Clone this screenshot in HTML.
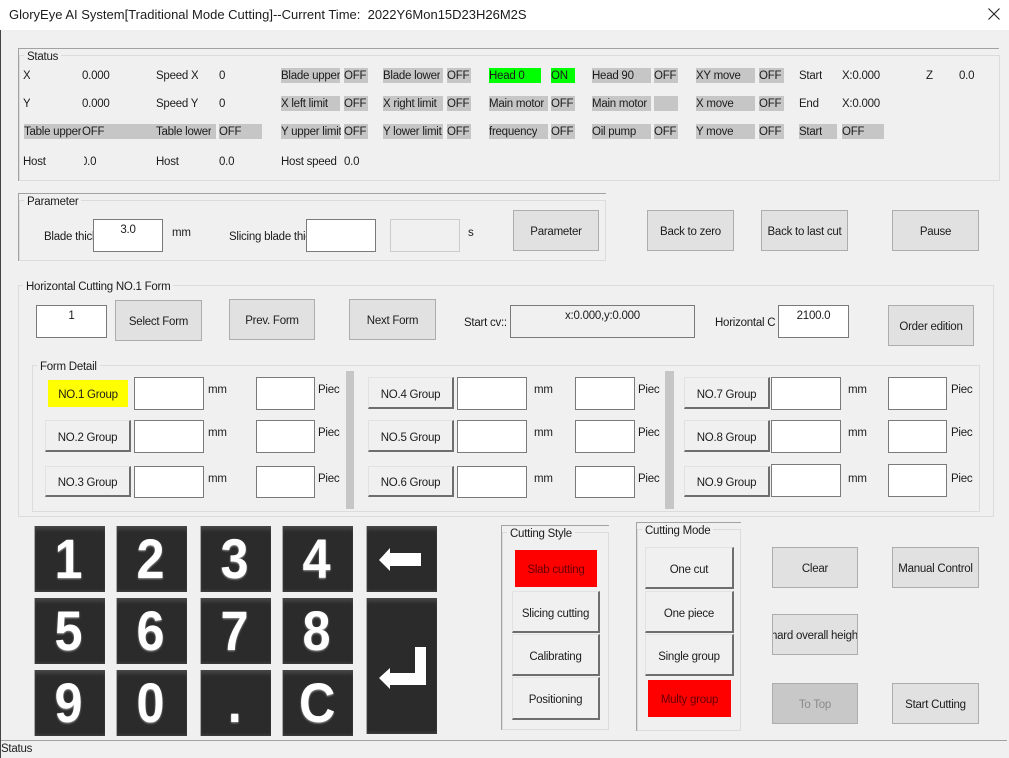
<!DOCTYPE html>
<html><head><meta charset="utf-8"><style>
html,body{margin:0;padding:0}
body{width:1009px;height:758px;position:relative;overflow:hidden;background:#f0f0f0;font-family:"Liberation Sans",sans-serif;font-size:11.5px;letter-spacing:-.25px;color:#1c1c1c}
div{box-sizing:border-box}
.t,.b,.f,.r,.i,.g,.k,.l{position:absolute;white-space:nowrap}
.t{height:16px;line-height:16px;overflow:hidden;margin-top:1px}
.g{background:#c6c6c6;height:15px}
.f{background:#e1e1e1;border:1px solid #adadad;text-align:center;height:41px;line-height:43px;width:87px;overflow:hidden}
.r{background:#f0f0f0;border:1px solid #e2e2e2;border-right:2px solid #6e6e6e;border-bottom:2px solid #6e6e6e;text-align:center;overflow:hidden;padding-top:1px}
.i{background:#fff;border:1px solid #7a7a7a;text-align:center;height:33px;line-height:20px}
.k{width:70px;height:66px;background:#2b2b2b;color:#fff;font-weight:bold;font-size:56px;letter-spacing:0;line-height:66px;text-align:center;box-shadow:-1px 0 0 #a8a8a8,inset 0 5px 5px -2px #4a4a4a,inset 0 -2px 3px -1px #444;text-shadow:0 1px 2px #999}
.k span{display:inline-block;transform:scaleX(.9);position:relative;left:-1px}
.l{background:#f0f0f0;padding:0 3px;height:14px;line-height:14px;margin-top:1px}
.box{position:absolute;border:1px solid #dcdcdc}
.d{position:absolute;background:#a2a2a2}
</style></head><body>
<div style="position:absolute;left:0;top:0;width:1009px;height:30px;background:#fff"></div>
<div class="t" style="left:9px;top:6px;font-size:13px;letter-spacing:0">GloryEye AI System[Traditional Mode Cutting]--Current Time:&nbsp; 2022Y6Mon15D23H26M2S</div>
<svg style="position:absolute;left:988px;top:8px" width="12" height="12"><path d="M.5 .5L11.5 11.5M11.5 .5L.5 11.5" stroke="#222" stroke-width="1.1" fill="none"/></svg>
<div style="position:absolute;left:0;top:30px;width:1px;height:728px;background:#444"></div>

<!-- Status -->
<div class="d" style="left:18px;top:48px;width:981px;height:1px"></div>
<div class="d" style="left:18px;top:48px;width:1px;height:133px"></div>
<div class="box" style="left:19px;top:55px;width:981px;height:126px"></div>
<div class="l" style="left:24px;top:49px">Status</div>

<div class="g" style="left:24px;top:124px;width:192px"></div>
<div class="g" style="left:219px;top:124px;width:43px"></div>
<div class="g" style="left:281px;top:68px;width:59px"></div><div class="g" style="left:344px;top:68px;width:24px"></div>
<div class="g" style="left:281px;top:96px;width:59px"></div><div class="g" style="left:344px;top:96px;width:24px"></div>
<div class="g" style="left:281px;top:124px;width:59px"></div><div class="g" style="left:344px;top:124px;width:24px"></div>
<div class="g" style="left:383px;top:68px;width:60px"></div><div class="g" style="left:447px;top:68px;width:24px"></div>
<div class="g" style="left:383px;top:96px;width:60px"></div><div class="g" style="left:447px;top:96px;width:24px"></div>
<div class="g" style="left:383px;top:124px;width:60px"></div><div class="g" style="left:447px;top:124px;width:24px"></div>
<div class="g" style="left:489px;top:68px;width:52px;background:#00ff00"></div><div class="g" style="left:551px;top:68px;width:24px;background:#00ff00"></div>
<div class="g" style="left:489px;top:96px;width:59px"></div><div class="g" style="left:551px;top:96px;width:24px"></div>
<div class="g" style="left:489px;top:124px;width:59px"></div><div class="g" style="left:551px;top:124px;width:24px"></div>
<div class="g" style="left:592px;top:68px;width:59px"></div><div class="g" style="left:654px;top:68px;width:24px"></div>
<div class="g" style="left:592px;top:96px;width:59px"></div><div class="g" style="left:654px;top:96px;width:24px"></div>
<div class="g" style="left:592px;top:124px;width:59px"></div><div class="g" style="left:654px;top:124px;width:24px"></div>
<div class="g" style="left:696px;top:68px;width:59px"></div><div class="g" style="left:759px;top:68px;width:25px"></div>
<div class="g" style="left:696px;top:96px;width:59px"></div><div class="g" style="left:759px;top:96px;width:25px"></div>
<div class="g" style="left:696px;top:124px;width:59px"></div><div class="g" style="left:759px;top:124px;width:25px"></div>
<div class="g" style="left:799px;top:124px;width:38px"></div><div class="g" style="left:842px;top:124px;width:42px"></div>

<div class="t" style="left:23px;top:67px">X</div><div class="t" style="left:82px;top:67px">0.000</div><div class="t" style="left:156px;top:67px">Speed X</div><div class="t" style="left:219px;top:67px">0</div>
<div class="t" style="left:23px;top:95px">Y</div><div class="t" style="left:82px;top:95px">0.000</div><div class="t" style="left:156px;top:95px">Speed Y</div><div class="t" style="left:219px;top:95px">0</div>
<div class="t" style="left:24px;top:123px">Table upper</div><div class="t" style="left:82px;top:123px">OFF</div><div class="t" style="left:156px;top:123px">Table lower</div><div class="t" style="left:219px;top:123px">OFF</div>
<div class="t" style="left:23px;top:153px">Host</div><div class="t" style="left:84px;top:153px;width:16px"><span style="margin-left:-3px">0.0</span></div><div class="t" style="left:156px;top:153px">Host</div><div class="t" style="left:219px;top:153px">0.0</div>
<div class="t" style="left:281px;top:67px">Blade upper</div><div class="t" style="left:344px;top:67px">OFF</div>
<div class="t" style="left:281px;top:95px">X left limit</div><div class="t" style="left:344px;top:95px">OFF</div>
<div class="t" style="left:281px;top:123px">Y upper limit</div><div class="t" style="left:344px;top:123px">OFF</div>
<div class="t" style="left:281px;top:153px">Host speed</div><div class="t" style="left:344px;top:153px">0.0</div>
<div class="t" style="left:383px;top:67px">Blade lower</div><div class="t" style="left:447px;top:67px">OFF</div>
<div class="t" style="left:383px;top:95px">X right limit</div><div class="t" style="left:447px;top:95px">OFF</div>
<div class="t" style="left:383px;top:123px">Y lower limit</div><div class="t" style="left:447px;top:123px">OFF</div>
<div class="t" style="left:489px;top:67px">Head 0</div><div class="t" style="left:551px;top:67px">ON</div>
<div class="t" style="left:489px;top:95px">Main motor</div><div class="t" style="left:551px;top:95px">OFF</div>
<div class="t" style="left:489px;top:123px">frequency</div><div class="t" style="left:551px;top:123px">OFF</div>
<div class="t" style="left:592px;top:67px">Head 90</div><div class="t" style="left:654px;top:67px">OFF</div>
<div class="t" style="left:592px;top:95px">Main motor</div>
<div class="t" style="left:592px;top:123px">Oil pump</div><div class="t" style="left:654px;top:123px">OFF</div>
<div class="t" style="left:696px;top:67px">XY move</div><div class="t" style="left:759px;top:67px">OFF</div>
<div class="t" style="left:696px;top:95px">X move</div><div class="t" style="left:759px;top:95px">OFF</div>
<div class="t" style="left:696px;top:123px">Y move</div><div class="t" style="left:759px;top:123px">OFF</div>
<div class="t" style="left:799px;top:67px">Start</div><div class="t" style="left:842px;top:67px">X:0.000</div>
<div class="t" style="left:799px;top:95px">End</div><div class="t" style="left:842px;top:95px">X:0.000</div>
<div class="t" style="left:799px;top:123px">Start</div><div class="t" style="left:842px;top:123px">OFF</div>
<div class="t" style="left:926px;top:67px">Z</div><div class="t" style="left:959px;top:67px">0.0</div>

<!-- Parameter -->
<div class="d" style="left:18px;top:193px;width:588px;height:1px"></div>
<div class="d" style="left:18px;top:193px;width:1px;height:68px"></div>
<div class="box" style="left:19px;top:200px;width:587px;height:61px"></div>
<div class="l" style="left:24px;top:194px">Parameter</div>
<div class="t" style="left:44px;top:228px;width:49px">Blade thick</div>
<div class="i" style="left:93px;top:219px;width:70px">3.0</div>
<div class="t" style="left:172px;top:224px">mm</div>
<div class="t" style="left:229px;top:228px;width:77px">Slicing blade thick</div>
<div class="i" style="left:306px;top:219px;width:70px"></div>
<div class="i" style="left:390px;top:219px;width:70px;background:#f0f0f0;border-color:#ccc"></div>
<div class="t" style="left:468px;top:224px">s</div>
<div class="f" style="left:513px;top:210px;width:86px">Parameter</div>
<div class="f" style="left:647px;top:210px">Back to zero</div>
<div class="f" style="left:761px;top:210px">Back to last cut</div>
<div class="f" style="left:892px;top:210px">Pause</div>

<!-- Horizontal -->
<div class="box" style="left:18px;top:285px;width:976px;height:232px"></div>
<div class="l" style="left:23px;top:279px">Horizontal Cutting NO.1 Form</div>
<div class="i" style="left:36px;top:305px;width:71px">1</div>
<div class="f" style="left:115px;top:300px">Select Form</div>
<div class="f" style="left:229px;top:299px;width:86px">Prev. Form</div>
<div class="f" style="left:349px;top:299px">Next Form</div>
<div class="t" style="left:464px;top:314px">Start cv::</div>
<div class="i" style="left:510px;top:305px;width:185px;background:#f0f0f0">x:0.000,y:0.000</div>
<div class="t" style="left:715px;top:314px;width:60px">Horizontal Cutting</div>
<div class="i" style="left:778px;top:305px;width:71px">2100.0</div>
<div class="f" style="left:888px;top:305px;width:86px">Order edition</div>

<div class="box" style="left:32px;top:365px;width:948px;height:147px"></div>
<div class="l" style="left:37px;top:359px">Form Detail</div>
<div class="d" style="left:346px;top:371px;width:8px;height:138px;background:#c6c6c6"></div>
<div class="d" style="left:665px;top:371px;width:9px;height:138px;background:#c6c6c6"></div>

<div class="t" style="left:48px;top:380px;width:80px;height:27px;line-height:31px;margin-top:0;background:#ffff00;text-align:center">NO.1 Group</div>
<div class="r" style="left:45px;top:420px;width:86px;height:32px;line-height:33px">NO.2 Group</div>
<div class="r" style="left:45px;top:466px;width:86px;height:31px;line-height:31px">NO.3 Group</div>
<div class="r" style="left:368px;top:377px;width:86px;height:32px;line-height:33px">NO.4 Group</div>
<div class="r" style="left:368px;top:420px;width:86px;height:32px;line-height:33px">NO.5 Group</div>
<div class="r" style="left:368px;top:466px;width:86px;height:31px;line-height:31px">NO.6 Group</div>
<div class="r" style="left:684px;top:377px;width:86px;height:32px;line-height:33px">NO.7 Group</div>
<div class="r" style="left:684px;top:420px;width:86px;height:32px;line-height:33px">NO.8 Group</div>
<div class="r" style="left:684px;top:466px;width:86px;height:31px;line-height:31px">NO.9 Group</div>

<div class="i" style="left:134px;top:377px;width:70px"></div><div class="i" style="left:256px;top:377px;width:59px"></div>
<div class="i" style="left:134px;top:420px;width:70px"></div><div class="i" style="left:256px;top:420px;width:59px"></div>
<div class="i" style="left:134px;top:466px;width:70px;height:32px"></div><div class="i" style="left:256px;top:466px;width:59px;height:32px"></div>
<div class="i" style="left:457px;top:377px;width:70px"></div><div class="i" style="left:575px;top:377px;width:60px"></div>
<div class="i" style="left:457px;top:420px;width:70px"></div><div class="i" style="left:575px;top:420px;width:60px"></div>
<div class="i" style="left:457px;top:466px;width:70px;height:32px"></div><div class="i" style="left:575px;top:466px;width:60px;height:32px"></div>
<div class="i" style="left:771px;top:377px;width:70px"></div><div class="i" style="left:888px;top:377px;width:59px"></div>
<div class="i" style="left:771px;top:420px;width:70px"></div><div class="i" style="left:888px;top:420px;width:59px"></div>
<div class="i" style="left:771px;top:464px;width:70px"></div><div class="i" style="left:888px;top:464px;width:59px"></div>

<div class="t" style="left:208px;top:381px">mm</div><div class="t" style="left:318px;top:381px;width:22px">Piece</div>
<div class="t" style="left:208px;top:424px">mm</div><div class="t" style="left:318px;top:424px;width:22px">Piece</div>
<div class="t" style="left:208px;top:470px">mm</div><div class="t" style="left:318px;top:470px;width:22px">Piece</div>
<div class="t" style="left:534px;top:381px">mm</div><div class="t" style="left:638px;top:381px;width:22px">Piece</div>
<div class="t" style="left:534px;top:424px">mm</div><div class="t" style="left:638px;top:424px;width:22px">Piece</div>
<div class="t" style="left:534px;top:470px">mm</div><div class="t" style="left:638px;top:470px;width:22px">Piece</div>
<div class="t" style="left:848px;top:381px">mm</div><div class="t" style="left:951px;top:381px;width:22px">Piece</div>
<div class="t" style="left:848px;top:424px">mm</div><div class="t" style="left:951px;top:424px;width:22px">Piece</div>
<div class="t" style="left:848px;top:470px">mm</div><div class="t" style="left:951px;top:470px;width:22px">Piece</div>

<!-- Keypad -->
<div class="k" style="left:35px;top:526px"><span>1</span></div><div class="k" style="left:117px;top:526px"><span>2</span></div><div class="k" style="left:201px;top:526px"><span>3</span></div><div class="k" style="left:283px;top:526px"><span>4</span></div>
<div class="k" style="left:367px;top:526px"></div>
<div class="k" style="left:35px;top:598px"><span>5</span></div><div class="k" style="left:117px;top:598px"><span>6</span></div><div class="k" style="left:201px;top:598px"><span>7</span></div><div class="k" style="left:283px;top:598px"><span>8</span></div>
<div class="k" style="left:367px;top:598px;height:136px"></div>
<div class="k" style="left:35px;top:670px"><span>9</span></div><div class="k" style="left:117px;top:670px"><span>0</span></div><div class="k" style="left:201px;top:670px"><span>.</span></div><div class="k" style="left:283px;top:670px"><span>C</span></div>
<svg style="position:absolute;left:367px;top:526px" width="71" height="208"><path d="M12 34L23 22V27H54V40H23V45Z" fill="#fff"/><path d="M48 121H59V159H23V163L12 152L23 142V147H48Z" fill="#fff"/></svg>

<!-- Cutting Style -->
<div class="d" style="left:501px;top:525px;width:108px;height:1px"></div>
<div class="d" style="left:501px;top:525px;width:1px;height:205px"></div>
<div class="box" style="left:502px;top:532px;width:107px;height:198px;border-color:#dcdcdc"></div>
<div class="l" style="left:507px;top:526px">Cutting Style</div>
<div class="t" style="left:515px;top:550px;width:82px;height:37px;line-height:41px;margin-top:0;background:#ff0000;text-align:center;color:#600">Slab cutting</div>
<div class="r" style="left:512px;top:591px;width:88px;height:42px;line-height:42px">Slicing cutting</div>
<div class="r" style="left:512px;top:634px;width:88px;height:42px;line-height:42px">Calibrating</div>
<div class="r" style="left:512px;top:677px;width:88px;height:43px;line-height:42px">Positioning</div>

<!-- Cutting Mode -->
<div class="d" style="left:636px;top:522px;width:105px;height:1px"></div>
<div class="d" style="left:636px;top:522px;width:1px;height:209px"></div>
<div class="box" style="left:637px;top:529px;width:104px;height:202px;border-color:#dcdcdc"></div>
<div class="l" style="left:642px;top:523px">Cutting Mode</div>
<div class="r" style="left:645px;top:547px;width:89px;height:42px;line-height:42px">One cut</div>
<div class="r" style="left:645px;top:591px;width:89px;height:42px;line-height:42px">One piece</div>
<div class="r" style="left:645px;top:634px;width:89px;height:42px;line-height:42px">Single group</div>
<div class="t" style="left:648px;top:680px;width:83px;height:37px;line-height:41px;margin-top:0;background:#ff0000;text-align:center;color:#600">Multy group</div>

<div class="f" style="left:772px;top:547px;width:86px">Clear</div>
<div class="f" style="left:892px;top:547px">Manual Control</div>
<div class="f" style="left:772px;top:614px;width:86px;text-align:left"><span style="margin-left:-2px">hard overall height</span></div>
<div class="f" style="left:772px;top:683px;width:86px;background:#c8c8c8;color:#8a8a8a">To Top</div>
<div class="f" style="left:892px;top:683px">Start Cutting</div>

<!-- Status bar -->
<div class="d" style="left:1px;top:740px;width:1006px;height:1px"></div>
<div class="t" style="left:1px;top:740px">Status</div>
</body></html>
